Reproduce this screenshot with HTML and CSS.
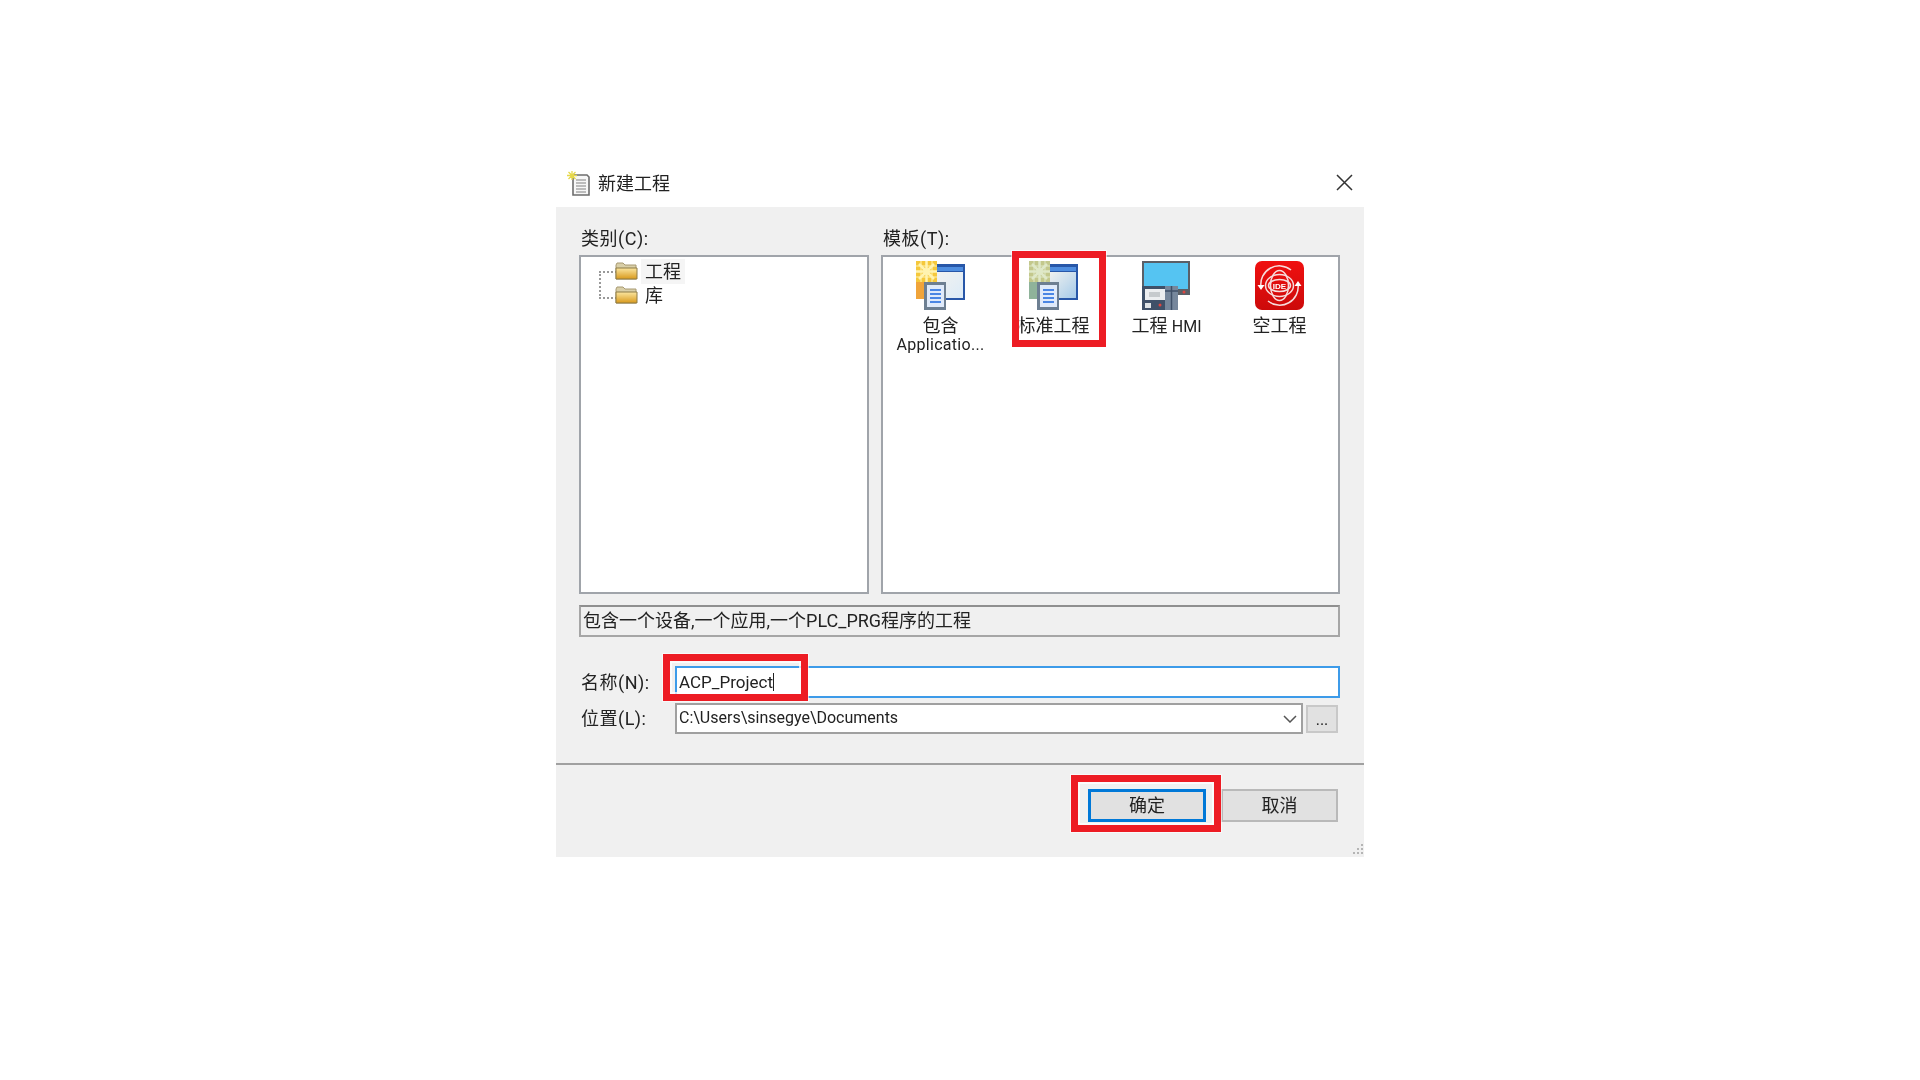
FILE: index.html
```html
<!DOCTYPE html>
<html lang="zh-CN">

<head>
    <meta charset="UTF-8">
    <title>新建工程</title>
    <link rel="stylesheet" href="styles.css">
</head>

<body>

    <div class="dialog">
        <div class="titleBar">
            <svg class="titleIcon" width="24" height="26" viewBox="0 0 24 26">
                <path d="M6 4h14l2 2v18H6z" fill="#f7f7f7" stroke="#6e6e6e" stroke-width="1.6"/>
                <path d="M9 9h10M9 12h10M9 15h10M9 18h10M9 21h10" stroke="#a9a9a9" stroke-width="1.4"/>
                <path d="M5 0v9M0 4.500h10M1.500 1l7 7M8.500 1l-7 7" stroke="#e6d84a" stroke-width="1.3"/>
            </svg>
            <span class="titleText">新建工程</span>
            <svg class="closeIcon" width="17" height="17" viewBox="0 0 17 17">
                <path d="M1 1l15 15M16 1L1 16" stroke="#333" stroke-width="1.500" fill="none"/>
            </svg>
        </div>

        <div class="dialogBody">
            <div class="panes">
                <div class="pane">
                    <label class="paneLabel">类别(C):</label>
                    <div class="box tree">
                        <div class="treeRow">
                            <svg class="folder" width="23" height="18" viewBox="0 0 23 18"><use href="#folderIcon"/></svg>
                            <span class="treeText treeTextHover">工程</span>
                        </div>
                        <div class="treeRow">
                            <svg class="folder" width="23" height="18" viewBox="0 0 23 18"><use href="#folderIcon"/></svg>
                            <span class="treeText">库</span>
                        </div>
                    </div>
                </div>
                <div class="pane">
                    <label class="paneLabel">模板(T):</label>
                    <div class="box templates">
                        <div class="template">
                            <svg width="49" height="49" viewBox="0 0 49 49" style="--pane:#dcebf7;--star:#f5c83c;--ray:#fff3b0;--low:#f0a43a"><use href="#appIcon"/></svg>
                            <span class="templateName">包含<br><span class="templateSub">Applicatio...</span></span>
                        </div>
                        <div class="template">
                            <svg width="49" height="49" viewBox="0 0 49 49" style="--pane:#a6cbe9;--star:#c3c88c;--ray:#dfe8c8;--low:#8fb39a"><use href="#appIcon"/></svg>
                            <span class="templateName">标准工程</span>
                        </div>
                        <div class="template">
                            <svg width="49" height="49" viewBox="0 0 49 49">
                                <rect x="1" y="1" width="46" height="32" fill="#55c4f2" stroke="#5a6068" stroke-width="2"/>
                                <rect x="36" y="28" width="12" height="6" fill="#5a6068"/>
                                <circle cx="42" cy="31" r="1.500" fill="#e0453f"/>
                                <rect x="0" y="25" width="36" height="24" fill="#3f5068"/>
                                <rect x="3" y="28" width="20" height="11" fill="#eceef0"/>
                                <rect x="7" y="31" width="11" height="5" fill="#c6cacd"/>
                                <rect x="3" y="42" width="6" height="5" fill="#dfe3e6"/>
                                <circle cx="18" cy="44" r="1.500" fill="#e0453f"/>
                                <rect x="23" y="25" width="13" height="24" fill="#76879c"/>
                                <path d="M29.500 25v24M23 30h13" stroke="#3f5068" stroke-width="1.500"/>
                            </svg>
                            <span class="templateName">工程 <span class="hmi">HMI</span></span>
                        </div>
                        <div class="template">
                            <svg width="49" height="49" viewBox="0 0 49 49">
                                <defs>
                                    <linearGradient id="ideRed" x1="0" y1="0" x2="0" y2="1">
                                        <stop offset="0" stop-color="#f01010"/>
                                        <stop offset="1" stop-color="#cc0a0a"/>
                                    </linearGradient>
                                </defs>
                                <rect width="49" height="49" rx="7" fill="url(#ideRed)"/>
                                <g fill="none" stroke="#f6dcdc" stroke-width="1.500">
                                    <path d="M6 26A18.500 18.500 0 0 1 36 9"/>
                                    <path d="M43 23A18.500 18.500 0 0 1 13 40"/>
                                    <ellipse cx="24.500" cy="24.500" rx="9" ry="15"/>
                                    <ellipse cx="24.500" cy="24.500" rx="14" ry="11"/>
                                    <ellipse cx="24.500" cy="24.500" rx="11" ry="6"/>
                                </g>
                                <path d="M2.500 24l7 0-3.500 5zM39.500 25l7 0-3.500-5z" fill="#fff"/>
                                <text class="ideText" x="24.500" y="27.500" text-anchor="middle">IDE</text>
                            </svg>
                            <span class="templateName">空工程</span>
                        </div>
                    </div>
                </div>
            </div>

            <div class="description">包含一个设备,一个应用,一个PLC_PRG程序的工程</div>

            <div class="formRow nameRow">
                <label class="formLabel">名称(N):</label>
                <div class="nameInput">ACP_Project<span class="caret"></span></div>
            </div>
            <div class="formRow">
                <label class="formLabel">位置(L):</label>
                <div class="pathInput">
                    <span>C:\Users\sinsegye\Documents</span>
                    <svg width="14" height="8" viewBox="0 0 14 8"><path d="M1 1l6 6 6-6" stroke="#555" stroke-width="1.500" fill="none"/></svg>
                </div>
                <div class="browseButton">...</div>
            </div>

            <div class="footer">
                <div class="button okButton">确定</div>
                <div class="button">取消</div>
                <svg class="grip" width="12" height="14" viewBox="0 0 12 14">
                    <path d="M9 1h2v2H9zM5 5h2v2H5zM9 5h2v2H9zM1 9h2v2H1zM5 9h2v2H5zM9 9h2v2H9z" fill="#b5b5b5"/>
                </svg>
            </div>
        </div>

        <!-- red marks over the dialog -->
        <div class="mark markTemplate"></div>
        <div class="mark markName"></div>
        <div class="mark markOk"></div>
    </div>

    <svg class="defs" width="0" height="0">
        <defs>
            <linearGradient id="folderFill" x1="0" y1="0" x2="0" y2="1">
                <stop offset="0" stop-color="#fbe6a0"/>
                <stop offset="1" stop-color="#d99a1c"/>
            </linearGradient>
            <linearGradient id="glassShine" x1="0" y1="0" x2="1" y2="1">
                <stop offset="0" stop-color="#f2f2f0"/>
                <stop offset="1" stop-color="#f2f2f0" stop-opacity="0"/>
            </linearGradient>
            <symbol id="folderIcon" viewBox="0 0 23 18">
                <path d="M1 3l1-2h6l2 2h11v14H1z" fill="#d9cfa8" stroke="#a89a72"/>
                <path d="M1 6h21v11H1z" fill="url(#folderFill)" stroke="#8d7a45"/>
            </symbol>
            <symbol id="appIcon" viewBox="0 0 49 49">
                <rect x="14" y="3" width="35" height="36" fill="#2857a8"/>
                <rect x="16" y="6" width="31" height="4" fill="#4f8ee0"/>
                <rect x="20" y="11" width="27" height="26" fill="var(--pane)"/>
                <rect x="20" y="11" width="27" height="26" fill="url(#glassShine)"/>
                <rect x="0" y="18" width="16" height="20" fill="var(--low)"/>
                <rect x="0" y="0" width="21" height="21" fill="var(--star)"/>
                <path d="M0 5h21M0 16h21M5 0v21M16 0v21" stroke="var(--ray)" stroke-width="1"/>
                <path d="M10.500 0v21M0 10.500h21M3 3l15 15M18 3L3 18" stroke="var(--ray)" stroke-width="2.500"/>
                <rect x="8" y="21" width="22" height="28" fill="#6d7f92"/>
                <rect x="11" y="24" width="17" height="22" fill="#dfeafa"/>
                <path d="M14 29h11M14 33h11M14 37h11M14 41h11" stroke="#4a86e4" stroke-width="2"/>
            </symbol>
        </defs>
    </svg>

</body>

</html>
```

FILE: styles.css
```css
* {
    box-sizing: border-box;
}

body {
    margin: 0;
    height: 1080px;
    padding-top: 160px;
    display: flex;
    justify-content: center;
    align-items: flex-start;
    background-color: #fff;
    color: #222;
    font-family: Roboto, "Noto Sans CJK SC", sans-serif;
    font-size: 18px;
    overflow: hidden;
}

.defs {
    position: absolute;
}

.dialog {
    position: relative;
    width: 808px;
    filter: blur(0.4px);
}

.titleBar {
    height: 47px;
    display: flex;
    align-items: center;
    padding: 0 11px;
    background-color: #fff;
}

.titleIcon {
    margin-right: 7px;
}

.titleText {
    font-size: 18px;
    margin-bottom: 3px;
}

.closeIcon {
    margin-left: auto;
    margin-bottom: 2px;
}

.dialogBody {
    height: 650px;
    padding: 0 24px 0 23px;
    display: flex;
    flex-direction: column;
    background-color: #f0f0f0;
}

.panes {
    display: grid;
    grid-template-columns: 290px 459px;
    gap: 12px;
}

.paneLabel {
    display: block;
    height: 48px;
    padding: 19px 0 0 2px;
    line-height: 26px;
    letter-spacing: 0.5px;
}

.box {
    height: 339px;
    background-color: #fff;
    border: 2px solid #a0a4aa;
}

/* tree */
.tree {
    position: relative;
    padding: 2px 0 0 34px;
}

.tree::before {
    content: "";
    position: absolute;
    left: 18px;
    top: 14px;
    width: 16px;
    height: 24px;
    border: 2px dotted #999;
    border-right: none;
}

.treeRow {
    height: 24px;
    display: flex;
    align-items: center;
}

.folder {
    position: relative;
    flex: none;
}

.treeText {
    padding: 1px 4px 0;
    line-height: 24px;
    margin-left: 3px;
}

.treeTextHover {
    background-color: #f5f5f5;
}

/* templates */
.templates {
    display: grid;
    grid-template-columns: repeat(4, 113px);
    align-content: start;
    padding: 4px 0 0 1px;
}

.template {
    display: flex;
    flex-direction: column;
    align-items: center;
}

.templateName {
    margin-top: 5px;
    text-align: center;
    line-height: 22px;
    white-space: nowrap;
}

.hmi {
    font-size: 16px;
}

.templateSub {
    display: block;
    margin-top: -1px;
    font-size: 16px;
    line-height: 18px;
    letter-spacing: 0.3px;
}

.ideText {
    fill: #fff;
    font-family: "Liberation Sans", sans-serif;
    font-size: 8px;
    font-weight: bold;
}

/* description and form */
.description {
    height: 32px;
    margin-top: 11px;
    padding-left: 2px;
    line-height: 28px;
    border: 2px solid #a6a6a6;
    border-top-color: #8f8f8f;
    white-space: nowrap;
}

.formRow {
    display: flex;
    align-items: center;
    margin-top: 5px;
}

.nameRow {
    margin-top: 29px;
}

.formLabel {
    width: 96px;
    padding-left: 2px;
    flex: none;
    letter-spacing: 0.5px;
    margin-bottom: 3px;
}

.nameInput {
    flex: 1;
    height: 32px;
    padding-left: 2px;
    line-height: 28px;
    background-color: #fff;
    border: 2px solid #3d9be9;
    font-size: 17px;
}

.caret {
    display: inline-block;
    width: 1px;
    height: 18px;
    vertical-align: -3px;
    background-color: #222;
}

.pathInput {
    width: 628px;
    height: 31px;
    padding: 0 3px 0 2px;
    display: flex;
    align-items: center;
    justify-content: space-between;
    background-color: #fff;
    border: 2px solid #a0a0a0;
    font-size: 16px;
}

.pathInput span {
    margin-bottom: 2px;
}

.pathInput svg {
    margin-right: 1px;
}

.browseButton {
    width: 32px;
    height: 28px;
    margin-left: 3px;
    text-align: center;
    line-height: 26px;
    font-size: 16px;
    background-color: #e1e1e1;
    border: 2px solid #c8c8c8;
}

/* footer */
.footer {
    position: relative;
    flex: 1;
    margin: 29px -24px 0 -23px;
    padding: 24px 26px 0 0;
    display: flex;
    justify-content: flex-end;
    align-items: flex-start;
    gap: 15px;
    border-top: 2px solid #a0a0a0;
}

.button {
    width: 117px;
    height: 33px;
    text-align: center;
    line-height: 29px;
    background-color: #e1e1e1;
    border: 2px solid #b9b9b9;
}

.okButton {
    width: 118px;
    border: 3px solid #0078d7;
    line-height: 27px;
}

.grip {
    position: absolute;
    right: 0;
    bottom: 0;
}

/* red marks */
.mark {
    position: absolute;
    border: 7px solid #ed1c24;
    box-shadow: inset 0 0 0 2px rgba(255, 255, 255, 0.75), 0 0 0 1px rgba(255, 255, 255, 0.6);
}

.markTemplate {
    left: 456px;
    top: 91px;
    width: 94px;
    height: 96px;
}

.markName {
    left: 107px;
    top: 494px;
    width: 145px;
    height: 47px;
}

.markOk {
    left: 515px;
    top: 615px;
    width: 150px;
    height: 57px;
}
```
